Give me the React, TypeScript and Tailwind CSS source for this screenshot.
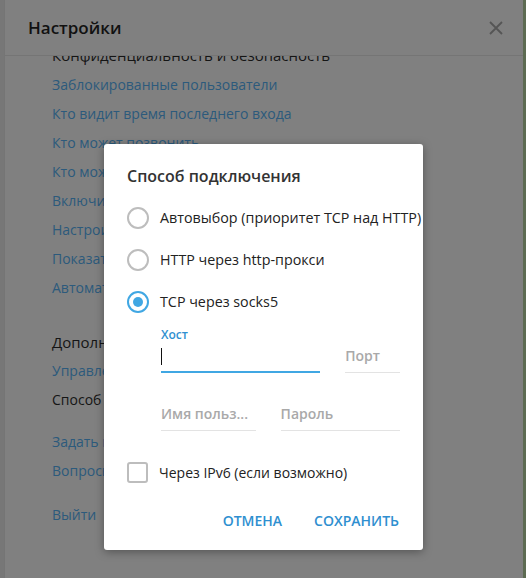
import React from 'react'

const font = { fontFamily: '"Open Sans", "Liberation Sans", sans-serif' }

const privacyLinks = [
  'Заблокированные пользователи',
  'Кто видит время последнего входа',
  'Кто может позвонить',
  'Кто может добавлять в группы',
  'Включить локальный код-пароль',
  'Настроить двухэтапную аутентификацию',
  'Показать все сессии',
  'Автоматическое удаление аккаунта',
]

function Radio({ checked, label }: { checked?: boolean; label: string }) {
  return (
    <div className="flex items-center h-[42px]">
      <span
        className={`shrink-0 w-[22px] h-[22px] rounded-full border-2 flex items-center justify-center ${
          checked ? 'border-[#40a7e3]' : 'border-[#bdbdbd]'
        }`}
      >
        {checked && <span className="w-[10px] h-[10px] rounded-full bg-[#40a7e3]" />}
      </span>
      <span className="ml-[11px] text-[14.3px] text-[#222] whitespace-nowrap">{label}</span>
    </div>
  )
}

function Field({ placeholder, className }: { placeholder: string; className: string }) {
  return (
    <div className={`flex flex-col ${className}`}>
      <span className="text-[14px] font-semibold text-[#a9a9a9] leading-[20px] pb-[6px] whitespace-nowrap">
        {placeholder}
      </span>
      <span className="h-px bg-[#e3e3e3]" />
    </div>
  )
}

function ProxyDialog() {
  return (
    <div className="absolute left-[104px] top-[144px] w-[319px] h-[406px] bg-white rounded-[3px] shadow-[0_2px_10px_rgba(0,0,0,0.35)] pl-[23px] pr-[23px] pt-[20px]">
      <h2 className="text-[16px] font-semibold text-[#333] leading-[24px]">Способ подключения</h2>
      <div className="mt-[9px]">
        <Radio label="Автовыбор (приоритет TCP над HTTP)" />
        <Radio label="HTTP через http-прокси" />
        <Radio checked label="TCP через socks5" />
      </div>
      <div className="pl-[34px] pt-[4px]">
        <div className="flex items-end gap-[25px]">
          <div className="flex flex-col w-[160px]">
            <span className="text-[12px] font-semibold text-[#2f8fd0] leading-[16px]">Хост</span>
            <span className="h-[26px] flex items-center">
              <span className="w-px h-[17px] bg-[#111]" />
            </span>
            <span className="h-[2px] bg-[#40a7e3] mt-[2px]" />
          </div>
          <Field placeholder="Порт" className="w-[55px]" />
        </div>
        <div className="flex gap-[25px] mt-[31px]">
          <Field placeholder="Имя польз..." className="w-[95px]" />
          <Field placeholder="Пароль" className="w-[120px]" />
        </div>
      </div>
      <div className="flex items-center mt-[31px]">
        <span className="shrink-0 w-[21px] h-[21px] rounded-[3px] border-2 border-[#bdbdbd]" />
        <span className="ml-[11px] text-[14px] text-[#222]">Через IPv6 (если возможно)</span>
      </div>
      <div className="flex justify-end gap-[32px] mt-[27px] pr-[1px]">
        <button className="text-[14px] font-semibold text-[#2f8fd0]">ОТМЕНА</button>
        <button className="text-[14px] font-semibold text-[#2f8fd0]">СОХРАНИТЬ</button>
      </div>
    </div>
  )
}

export default function App() {
  return (
    <div className="relative w-[526px] h-[578px] overflow-hidden bg-[#7a7a7a] flex" style={font}>
      <div className="w-[4px] bg-[#777]" />
      <div className="flex-1 bg-[#808080] flex flex-col border-l border-[#757575]">
        <div className="h-[56px] flex items-center justify-between pl-[23px] pr-[20px] border-b border-[#757575] relative z-10 bg-[#808080]">
          <h1 className="text-[17px] font-semibold text-[#111]">Настройки</h1>
          <svg width="14" height="14" viewBox="0 0 14 14" className="text-[#555]">
            <path d="M1 1L13 13M13 1L1 13" stroke="currentColor" strokeWidth="1.8" />
          </svg>
        </div>
        <div className="flex-1 overflow-hidden pl-[47px] text-[14px]">
          <div className="-mt-[11px] text-[15px] text-[#151515] leading-[20px] whitespace-nowrap">
            Конфиденциальность и безопасность
          </div>
          <div className="mt-[10px] flex flex-col">
            {privacyLinks.map((l) => (
              <div key={l} className="h-[29px] text-[#2c5a7c] leading-[20px] whitespace-nowrap">
                {l}
              </div>
            ))}
          </div>
          <div className="mt-[25px] text-[15px] text-[#151515] leading-[20px]">Дополнительно</div>
          <div className="mt-[9px] h-[29px] text-[#2c5a7c] leading-[20px]">Управление памятью устройства</div>
          <div className="h-[29px] text-[#151515] leading-[20px]">Способ подключения</div>
          <div className="mt-[13px] h-[29px] text-[#2c5a7c] leading-[20px]">Задать вопрос</div>
          <div className="h-[29px] text-[#2c5a7c] leading-[20px]">Вопросы о Telegram</div>
          <div className="mt-[15px] h-[29px] text-[#2c5a7c] leading-[20px]">Выйти</div>
        </div>
      </div>
      <div className="w-[3px] bg-[#5d6b52]" />
      <ProxyDialog />
    </div>
  )
}
